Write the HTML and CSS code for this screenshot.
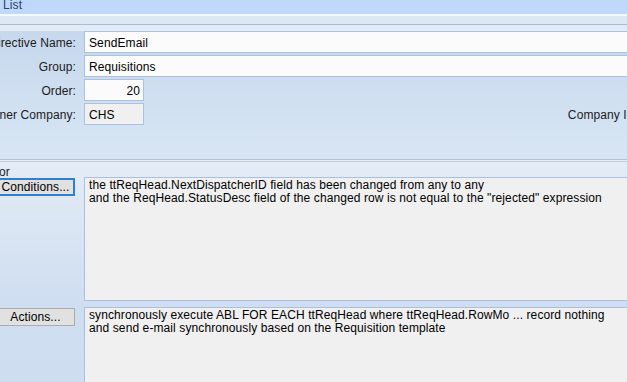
FILE: index.html
```html
<!DOCTYPE html>
<html lang="en">
<head>
    <meta charset="UTF-8">
    <title>Directive List</title>
    <link rel="stylesheet" href="styles.css">
</head>
<body>

  <div class="window">

    <div class="titlebar">
      <span class="titlebar-text">List</span>
    </div>

    <div class="toolbar"></div>
    <div class="tabstrip"></div>

    <div class="panel">
      <div class="field-row">
        <label class="field-label" for="directiveName">Directive Name:</label>
        <input class="field-input" type="text" id="directiveName" value="SendEmail">
      </div>
      <div class="field-row">
        <label class="field-label" for="group">Group:</label>
        <input class="field-input" type="text" id="group" value="Requisitions">
      </div>
      <div class="field-row short">
        <label class="field-label" for="order">Order:</label>
        <input class="field-input number" type="text" id="order" value="20">
      </div>
      <div class="field-row company">
        <label class="field-label" for="ownerCompany">Owner Company:</label>
        <input class="field-input readonly" type="text" id="ownerCompany" value="CHS" readonly>
        <div class="spacer"></div>
        <label class="field-label" for="companyId">Company ID:</label>
        <input class="field-input readonly" type="text" id="companyId" value="" readonly>
      </div>
    </div>

    <div class="editor">
      <div class="editor-caption">Editor</div>

      <div class="editor-row">
        <div class="editor-side">
          <button class="btn btn-default">Conditions...</button>
        </div>
        <div class="rule-text conditions">
          the ttReqHead.NextDispatcherID field has been changed from any to any<br>
          and the ReqHead.StatusDesc field of the changed row is not equal to the "rejected" expression
        </div>
      </div>

      <div class="editor-row">
        <div class="editor-side">
          <button class="btn">Actions...</button>
        </div>
        <div class="rule-text actions">
          synchronously execute ABL FOR EACH ttReqHead where ttReqHead.RowMo ... record nothing<br>
          and send e-mail synchronously based on the Requisition template
        </div>
      </div>
    </div>

  </div>

</body>
</html>
```

FILE: styles.css
```css
body {
    margin: 0;
    overflow: hidden;
    background-color: #e8eef6;
    font-family: "Liberation Sans", Arial, sans-serif;
    font-size: 12px;
    letter-spacing: 0.1px;
    color: #1b1b1b;
}

/* la fenêtre est plus large que la capture, on la décale à gauche */
.window {
    margin-left: -24px;
    width: 724px;
}

.titlebar {
    height: 14px;
    background-color: #bed9fc;
    padding-left: 27px;
    overflow: hidden;
}

.titlebar-text {
    display: block;
    line-height: 10px;
    color: #29446a;
}

.toolbar {
    height: 8px;
    border-top: 2px solid #f5f9fd;
    border-bottom: 1px solid #a9bcd6;
    background-color: #dde8f4;
}

.tabstrip {
    height: 6px;
    background-color: #e3ebf6;
}

.panel {
    height: 128px;
    box-sizing: content-box;
    border-bottom: 1px solid #b3c1d1;
    background: linear-gradient(#c7d8ed, #d8e6f4);
    display: flex;
    flex-direction: column;
    gap: 2px;
}

.field-row {
    display: grid;
    grid-template-columns: 108px 1fr;
    align-items: center;
}

.field-row.short {
    grid-template-columns: 108px 60px;
}

.field-row.company {
    grid-template-columns: 108px 60px 1fr auto 53px;
}

.field-label {
    display: flex;
    justify-content: flex-end;
    white-space: nowrap;
    padding: 2px 8px 0 0;
}

.field-input {
    height: 22px;
    box-sizing: border-box;
    border: 1px solid #abc1df;
    background-color: #fbfbfb;
    padding: 2px 4px 0;
    font-family: inherit;
    font-size: 12px;
    letter-spacing: 0.1px;
    color: #000;
    outline: none;
}

.field-input.number {
    text-align: right;
    padding-right: 3px;
}

.field-input.readonly {
    background-color: #f0f0f0;
}

.editor {
    margin-top: 1px;
    border-top: 1px solid #c3cedb;
    background: linear-gradient(#e4ecf6 0px, #cfdef1 140px, #cddcef);
    height: 260px;
    display: flex;
    flex-direction: column;
    gap: 6px;
}

.editor-caption {
    height: 15px;
    box-sizing: border-box;
    padding: 4px 0 0 2px;
    line-height: 13px;
    margin-bottom: -6px;
}

.editor-row {
    display: grid;
    grid-template-columns: 108px 1fr;
}

.editor-side {
    display: flex;
    justify-content: flex-end;
    align-items: flex-start;
    padding: 1px 9px 0 0;
}

.btn {
    width: 79px;
    height: 18px;
    box-sizing: border-box;
    padding: 0;
    border: 1px solid #adadad;
    background-color: #e1e1e1;
    font-family: inherit;
    font-size: 12px;
    letter-spacing: 0.1px;
    color: #000;
}

.btn-default {
    border: 2px solid #2f7fd5;
}

.rule-text {
    border: 1px solid #a9c0e0;
    background-color: #f0f0f0;
    padding: 1px 4px;
    line-height: 13px;
    white-space: nowrap;
    color: #000;
}

.rule-text.conditions {
    height: 124px;
    box-sizing: border-box;
}

.rule-text.actions {
    height: 100px;
}
```
